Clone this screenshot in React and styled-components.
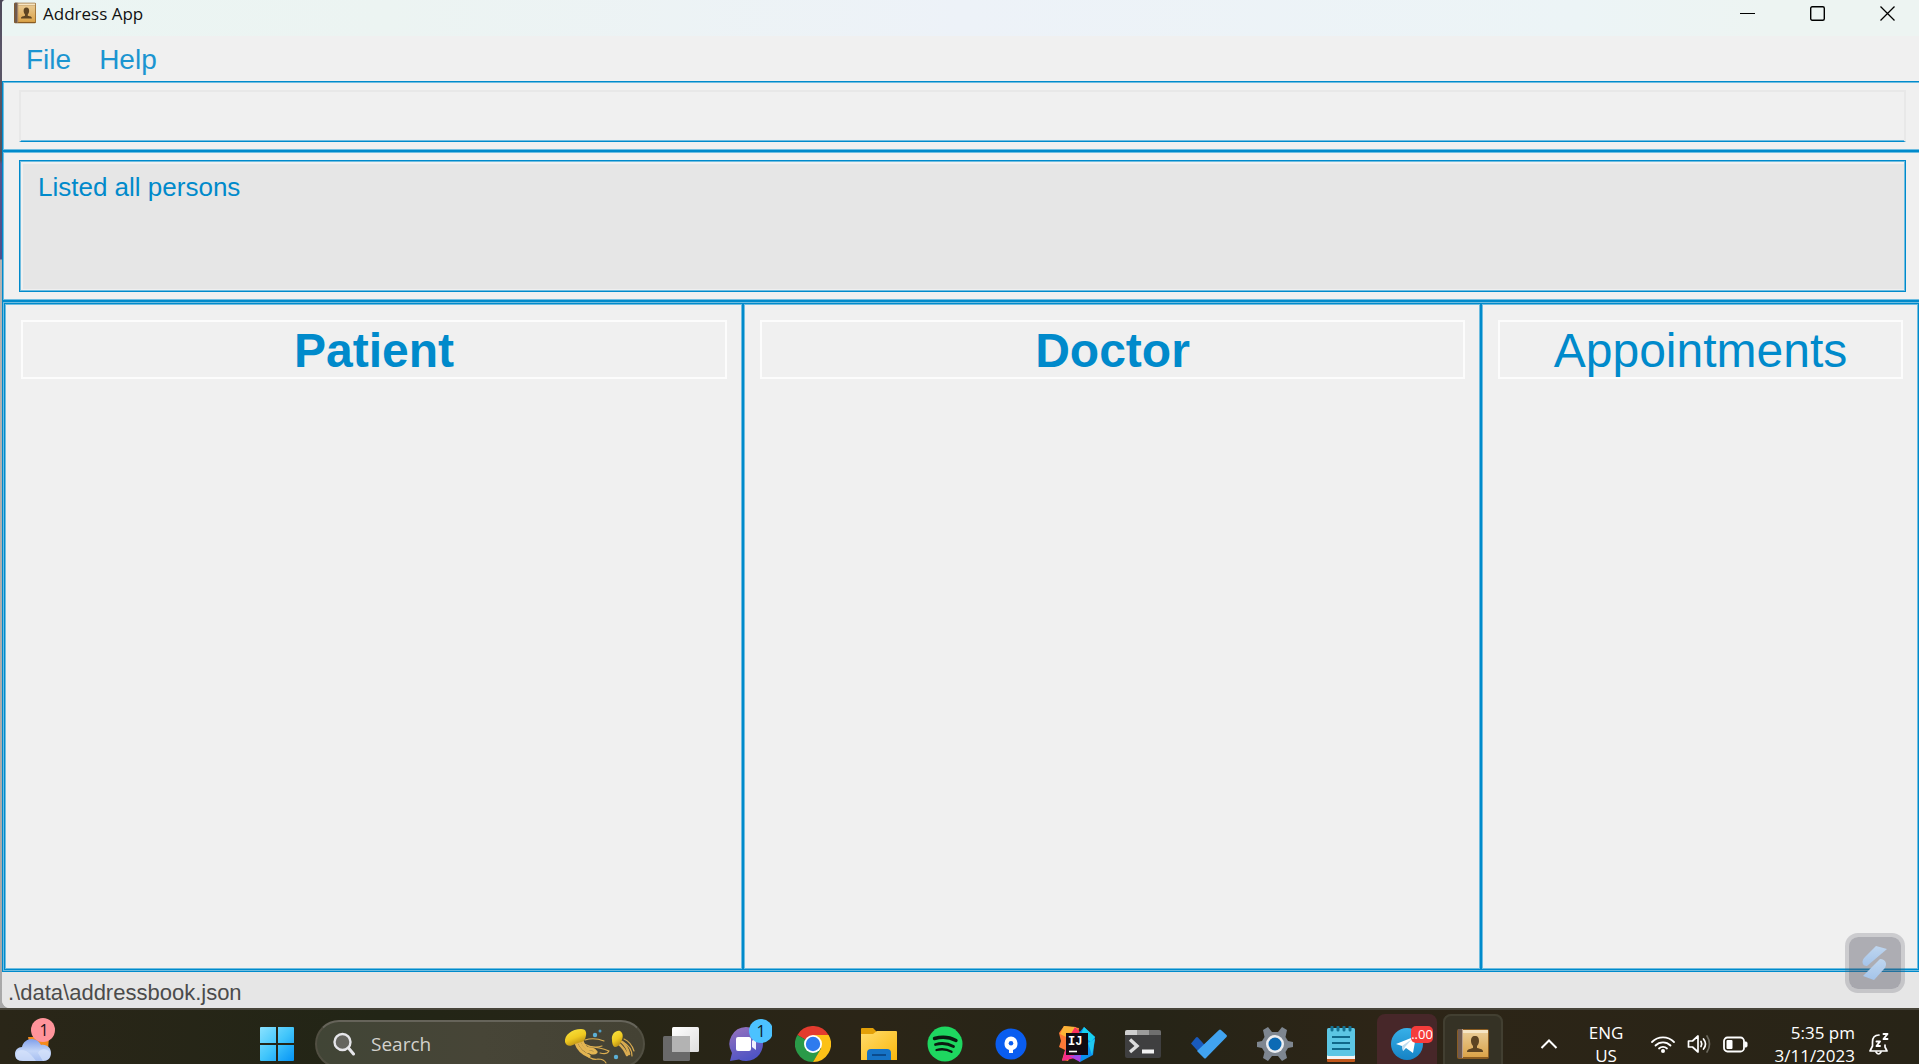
import React from 'react';
import styled, { createGlobalStyle, css } from 'styled-components';

const blue = '#008acb';
const paleBlue = '#6fbde0';
const panel = '#f0f0f0';
const arial = '"Liberation Sans", Arial, sans-serif';
const system = '"Open Sans", "Noto Sans", sans-serif';

const GlobalStyle = createGlobalStyle`
  *, *::before, *::after { box-sizing: border-box; }
  body { margin: 0; font-family: ${arial}; }
  button, input, textarea { font: inherit; color: inherit; border-radius: 0; }
  button { padding: 0; border: 0; background: none; cursor: default; }
  svg { display: block; flex: none; }
`;

const doubleLine = css`
  border: 1px solid ${blue};
  box-shadow: inset 0 0 0 1px ${paleBlue};
`;

const Desktop = styled.div`
  height: 100vh;
  display: flex;
  flex-direction: column;
  overflow: hidden;
  background: #28241a;
`;

const Backdrop = styled.div`
  flex: 1;
  min-height: 0;
  display: flex;
  padding-left: 2px;
  background: linear-gradient(#4c4858 0, #5a5568 50px, #54525c 160px, #55558e 164px, #50508c 259px, #b4b4b4 260px, #a8a8a8 100%);
`;

const Window = styled.div`
  flex: 1;
  min-width: 0;
  margin-right: -2px;
  display: flex;
  flex-direction: column;
  background: ${panel};
  border-radius: 4px 0 0 8px;
  overflow: hidden;
`;

const TitleBar = styled.header`
  height: 36px;
  margin-right: -1px;
  padding: 0 0 11px 12px;
  display: flex;
  align-items: center;
  background: linear-gradient(90deg, #ebf5f3 0, #ecf4f2 20%, #edf2f8 50%, #ecf4f6 82%, #edf4f2 92%);
`;

const WindowTitle = styled.h1`
  flex: 1;
  margin: 0;
  padding: 2px 0 0 7px;
  font: 400 17px/24px ${system};
  color: #111;
`;

const WindowButton = styled.button`
  width: 70px;
  height: 25px;
  padding-top: 2px;
  display: flex;
  align-items: center;
  justify-content: center;
`;

const MenuBar = styled.nav`
  height: 45px;
  padding: 2px 0 0 10px;
  display: flex;
`;

const MenuButton = styled.button`
  padding: 0 14px;
  font-size: 28px;
  color: #1b95d1;
`;

const Strip = styled.section`
  ${doubleLine}
  display: flex;
  padding: 8px 14px 8px 16px;
`;

const CommandInput = styled.input`
  flex: 1;
  min-width: 0;
  height: 52px;
  padding: 0 14px;
  font-size: 26px;
  color: ${blue};
  background: ${panel};
  border: 2px solid #e8e8e8;
  border-bottom: 1px solid ${blue};
  box-shadow: inset 0 -1px ${paleBlue};
  outline: none;
`;

const ResultFrame = styled.div`
  ${doubleLine}
  flex: 1;
  display: flex;
  padding: 3px 1px 2px 3px;
`;

const ResultText = styled.textarea`
  flex: 1;
  height: 125px;
  padding: 8px 15px;
  border: 0;
  outline: none;
  resize: none;
  overflow: hidden;
  font-size: 26px;
  line-height: 30px;
  color: ${blue};
  background: #e6e6e6;
`;

const Columns = styled.main`
  ${doubleLine}
  flex: 1;
  min-height: 0;
  padding: 1px;
  display: grid;
  grid-template-columns: 739fr 738fr 438fr;
`;

const Column = styled.section`
  ${doubleLine}
  padding: 16px 15px 16px 16px;
`;

const ColumnTitle = styled.h2`
  height: 59px;
  margin: 0;
  border: 2px solid #fcfcfc;
  font-size: 48px;
  line-height: 57px;
  font-weight: ${(p) => (p.$strong ? 700 : 400)};
  text-align: center;
  color: ${blue};
`;

const StatusBar = styled.footer`
  height: 36px;
  padding: 5px 6px 0;
  font-size: 22px;
  line-height: 31px;
  color: #4b4b4b;
  background: #e6e6e6;
`;

const FloatingButton = styled.button`
  position: fixed;
  right: 14px;
  bottom: 71px;
  width: 60px;
  height: 60px;
  display: grid;
  place-items: center;
  border: 4px solid rgba(90, 90, 105, 0.24);
  border-radius: 13px;
  background: rgba(80, 80, 95, 0.42) padding-box;
`;

const Taskbar = styled.div`
  height: 56px;
  border-top: 2px solid #48453a;
  display: flex;
  align-items: flex-start;
  background: linear-gradient(90deg, #2a2618, #222516 20%, #2b2517 45%, #262417 60%, #2d2517 72%, #282417);
  color: #fff;
  font-family: ${system};
  overflow: hidden;
`;

const Weather = styled.button`
  width: 247px;
  height: 60px;
  padding: 4px 0 0 14px;
`;

const Apps = styled.div`
  display: flex;
  gap: 6px;
  padding-top: 4px;
`;

const AppButton = styled.button`
  width: 60px;
  height: 60px;
  flex: none;
  display: grid;
  place-items: center;
  border-radius: 8px;
  background: ${(p) => p.$tint || 'none'};
  box-shadow: ${(p) => (p.$active ? 'inset 0 0 0 2px #423f31' : 'none')};
`;

const SearchBox = styled.label`
  width: 330px;
  height: 48px;
  margin: 6px 0 0 2px;
  padding: 0 4px 0 16px;
  display: flex;
  align-items: center;
  gap: 16px;
  border: 2px solid #514f42;
  border-top-color: #66645a;
  border-radius: 24px;
  background: linear-gradient(90deg, #414536, #474537 50%, #444234);
`;

const SearchInput = styled.input`
  flex: 1;
  min-width: 0;
  padding: 0;
  border: 0;
  outline: none;
  background: none;
  font-size: 19px;
  &::placeholder { color: #d3d2cd; opacity: 1; }
`;

const Tray = styled.div`
  margin-left: auto;
  padding: 11px 16px 0 0;
  display: flex;
  font-size: 17px;
  line-height: 23px;
`;

const TrayButton = styled.button`
  width: ${(p) => p.$w}px;
  height: 46px;
  display: flex;
  align-items: center;
  justify-content: center;
`;

const TrayText = styled.button`
  width: ${(p) => p.$w}px;
  height: 46px;
  text-align: ${(p) => p.$align};
`;

const BookIcon = ({ size }) => (
  <svg width={size} height={size} viewBox="0 0 32 32">
    <defs>
      <linearGradient id="cover" x1="0" y1="0" x2="0" y2="1">
        <stop offset="0" stopColor="#e8c991" /><stop offset="1" stopColor="#dba348" />
      </linearGradient>
    </defs>
    <rect x="0" y="1" width="32" height="30" rx="2" fill="#8a5c22" />
    <rect x="6" y="2" width="25" height="3" fill="#f6e5c4" />
    <rect x="6" y="5" width="25" height="24" fill="url(#cover)" />
    <rect x="1" y="1" width="4" height="29" fill="#6e5a50" />
    <rect x="5" y="1" width="1" height="29" fill="#baa18b" />
    <path d="M18 8c3 0 4 2 4 5 0 2-1 4-2 5v2c4 1 6 1 6 4H10c0-3 3-3 6-4v-2c-1-1-2-3-2-5 0-3 1-5 4-5z" fill="#5d4422" />
  </svg>
);

const WeatherIcon = () => (
  <svg width="44" height="50" viewBox="0 0 44 50">
    <defs>
      <linearGradient id="cloud" x1="0" y1="0" x2="0" y2="1">
        <stop offset="0" stopColor="#7f9fea" /><stop offset=".55" stopColor="#c4d6f8" /><stop offset="1" stopColor="#a5bdf0" />
      </linearGradient>
    </defs>
    <path d="M14 20h21l-1 13-8 4-10-8z" fill="#f58a1c" />
    <path d="M9 44C3 44 1 41 1 37s3-7 7-7c1-5 5-8 10-8 4 0 7 2 9 6 6-1 10 3 10 8s-3 8-8 8z" fill="url(#cloud)" />
    <path d="M9 44c-6 0-8-3-7-7 1-4 6-5 10-3 4 2 7 6 10 10zM24 36c2-5 10-5 12 0 1 5-3 8-7 8z" fill="#dbe6fb" opacity=".6" />
    <circle cx="29" cy="13" r="12" fill="#ff949b" />
    <text x="30" y="19" textAnchor="middle" fontFamily={system} fontSize="16" fill="#201014">1</text>
  </svg>
);

const StartIcon = () => (
  <svg width="36" height="36" viewBox="0 0 36 36">
    <defs>
      <linearGradient id="win" x1="0" y1="0" x2="1" y2="1">
        <stop offset="0" stopColor="#8ae2ff" /><stop offset=".5" stopColor="#42c6fb" /><stop offset="1" stopColor="#0594f6" />
      </linearGradient>
    </defs>
    <path d="M1 2q0-1 1-1h15v16H1zM19 1h15q1 0 1 1v15H19zM1 19h16v16H2q-1 0-1-1zM19 19h16v15q0 1-1 1H19z" fill="url(#win)" />
  </svg>
);

const SearchIcon = () => (
  <svg width="22" height="24" viewBox="0 0 22 24" fill="none" stroke="#e6e6ea" strokeWidth="2.4" strokeLinecap="round">
    <circle cx="9.5" cy="10" r="8" fill="#65655f" /><path d="M15.5 16l5 6" strokeWidth="3" />
  </svg>
);

const JellyfishIcon = () => (
  <svg width="75" height="42" viewBox="0 0 75 42" fill="none" strokeLinecap="round">
    <defs>
      <linearGradient id="bell" x1="0" y1="0" x2=".5" y2="1">
        <stop offset="0" stopColor="#f8e544" /><stop offset=".6" stopColor="#efc920" /><stop offset="1" stopColor="#b98e16" />
      </linearGradient>
    </defs>
    <g stroke="#dcae50">
      <path d="M21 17q9-3 19 1M20 21q10 5 18 2M24 24q12 0 21 4-2 4-9 2M20 30q8 8 14 6 6 0 8 4" strokeWidth="1.1" />
    </g>
    <g stroke="#e3b552">
      <path d="M12 20q3 9 13 13" strokeWidth="3.200" /><path d="M15 19q4 9 11 10 4 2 6 0" strokeWidth="3.200" /><path d="M18 18q3 8 8 8 4 0 5 2" strokeWidth="3" />
    </g>
    <path d="M1 19C0 12 8 6 17 6c6 0 6 5 4 10-2 4-6 3-10 5-5 3-9 2-10-2z" fill="url(#bell)" />
    <g stroke="#d9ab50">
      <path d="M55 21q5 4 8 11M58 19q5 4 7 12" strokeWidth="2.600" />
      <path d="M60 16q7 3 10 12M59 19q9 5 9 14" strokeWidth="1.200" />
    </g>
    <path d="M48 17c-1-6 4-10 8-9 4 2 3 8 1 11-1 3-4 5-6 5s-3-4-3-7z" fill="url(#bell)" />
    <circle cx="31" cy="12" r="2.200" fill="#5cb0d6" /><circle cx="36" cy="8" r="1.500" fill="#4e9dc4" /><circle cx="52" cy="34" r="2.200" fill="#5cb0d6" />
  </svg>
);

const TaskViewIcon = () => (
  <svg width="36" height="34" viewBox="0 0 36 34">
    <defs>
      <linearGradient id="tv" x1="0" y1="0" x2="1" y2="1"><stop offset="0" stopColor="#fff" /><stop offset="1" stopColor="#dedede" /></linearGradient>
    </defs>
    <rect x="9" y="0" width="27" height="25" rx="1.5" fill="url(#tv)" />
    <rect x="0" y="9" width="27" height="25" rx="1.5" fill="#696969" />
    <path d="M9 9h18v16H9z" fill="#b3b3b3" />
  </svg>
);

const ChatIcon = () => (
  <svg width="50" height="50" viewBox="0 2 50 50">
    <defs>
      <linearGradient id="chat" x1="0" y1="0" x2=".4" y2="1"><stop offset="0" stopColor="#9873bd" /><stop offset="1" stopColor="#5054c4" /></linearGradient>
    </defs>
    <path d="M24 10a17 17 0 1 1-7 32.500L8 44l2-8A17 17 0 0 1 24 10z" fill="url(#chat)" />
    <rect x="14" y="20" width="15" height="14" rx="2" fill="#fff" /><path d="M30 24l4-4v13l-4-3z" fill="#f1effd" />
    <circle cx="39" cy="14" r="12" fill="#4cc2ff" />
    <text x="39" y="20" textAnchor="middle" fontFamily={system} fontSize="16" fill="#0b1c26">1</text>
  </svg>
);

const ChromeIcon = () => (
  <svg width="36" height="36" viewBox="0 0 36 36">
    <path d="M18 18L2.400 9A18 18 0 0 1 33.600 9z" fill="#e33b2e" />
    <path d="M18 18L2.400 9A18 18 0 0 0 18 36l8-13z" fill="#2a9a48" />
    <path d="M18 9h15.600A18 18 0 0 1 18 36l8-13.500z" fill="#fcc117" />
    <circle cx="18" cy="18" r="9" fill="#fff" /><circle cx="18" cy="18" r="7.200" fill="#2e7bee" />
  </svg>
);

const FolderIcon = () => (
  <svg width="36" height="34" viewBox="0 0 36 34">
    <defs>
      <linearGradient id="fold" x1="0" y1="0" x2="1" y2="1"><stop offset="0" stopColor="#ffdc6c" /><stop offset="1" stopColor="#fab70c" /></linearGradient>
    </defs>
    <path d="M0 2q0-1 1-1h11l4 4v6H0z" fill="#e3a008" />
    <path d="M0 7h12l4-3h19q1 0 1 1v28H0z" fill="url(#fold)" />
    <path d="M6 33v-7q0-4 4-4h16q4 0 4 4v7z" fill="#1673c6" /><path d="M11 28h14" stroke="#0b4b8d" strokeWidth="2" />
  </svg>
);

const SpotifyIcon = () => (
  <svg width="36" height="36" viewBox="0 0 36 36" fill="none" stroke="#0b1a10" strokeLinecap="round">
    <circle cx="18" cy="18" r="17.500" fill="#1ed760" stroke="none" />
    <path d="M7.500 12.500c7-2 15-1.500 21.500 2" strokeWidth="3.400" /><path d="M8.500 18.500c6-1.700 12.500-1 18 2" strokeWidth="2.800" /><path d="M9.500 24c5-1.300 10.500-.8 15 1.800" strokeWidth="2.300" />
  </svg>
);

const SourcetreeIcon = () => (
  <svg width="32" height="32" viewBox="0 0 32 32">
    <circle cx="16" cy="16" r="15.500" fill="#0a5df0" />
    <path d="M16 8.500a7 7 0 0 1 2 13.500v3h-4v-3a7 7 0 0 1 2-13.500z" fill="#fff" /><circle cx="16" cy="15.300" r="2.300" fill="#0a5df0" />
  </svg>
);

const IdeaIcon = () => (
  <svg width="36" height="36" viewBox="0 0 36 36">
    <path d="M5 0l15 2-2 16-9 17-6-1 3-10-6-3 2-6-2-8z" fill="#fd7836" />
    <path d="M5 0l12 1 4 8-8 5-12-6z" fill="#fbb437" /><path d="M16 1l5 5-2 8-9-3z" fill="#fe315d" />
    <path d="M7 22l11 6-2 4-13 3z" fill="#f42c8b" /><path d="M25 1l11 10-2 18-13 7-7-8 5-20z" fill="#0b91f1" />
    <path d="M25 1l11 10-4 5-10-8z" fill="#18d1ef" /><path d="M10 30l12-1-1 7z" fill="#a946e8" /><path d="M29 17l7-4-3 16z" fill="#20c9ef" />
    <rect x="7" y="7" width="22" height="22" fill="#110a12" />
    <text x="9" y="19" fontFamily='"Liberation Mono", monospace' fontWeight="700" fontSize="12" fill="#fff">IJ</text>
    <path d="M10 25.500h8" stroke="#fff" strokeWidth="1.600" />
  </svg>
);

const TerminalIcon = () => (
  <svg width="36" height="28" viewBox="0 0 36 28">
    <rect width="36" height="28" rx="2" fill="#3f3f40" /><path d="M2 0h10v5H0V2q0-2 2-2z" fill="#cfcfcf" /><path d="M12 0h12v5H12z" fill="#9c9c9c" /><path d="M24 0h10q2 0 2 2v3H24z" fill="#6f6f6f" />
    <path d="M5 9.500l7 6.500-7 6" fill="none" stroke="#dcdcdc" strokeWidth="3.400" /><path d="M17 21.500h12" stroke="#f2f2f2" strokeWidth="4" />
  </svg>
);

const TodoIcon = () => (
  <svg width="36" height="30" viewBox="0 0 36 30">
    <path d="M0 14.500l5-6q1-1 2 0l8 9-5 8z" fill="#195abd" /><path d="M6 22L28 1q1-1 2 0l5.500 5q.8 1 0 2L15 29q-1 1-2 0z" fill="#41a3f0" />
  </svg>
);

const SettingsIcon = () => (
  <svg width="36" height="36" viewBox="0 0 36 36">
    <path d="M15 6l-4-5-5 3 1.500 7L5 15l-5 1v5l5 1 2.500 4L6 32l5 3 4-5h6l4 5 5-3-1.500-6L31 22l5-1v-5l-5-1-2.500-4L30 4l-5-3-4 5z" fill="#7e8690" />
    <circle cx="18" cy="18" r="9" fill="#eceef1" /><circle cx="18" cy="18" r="6.500" fill="#0c6ab4" />
  </svg>
);

const NotepadIcon = () => (
  <svg width="28" height="36" viewBox="0 0 28 36">
    <rect y="30" width="28" height="6" rx="1" fill="#c2571b" /><rect y="28" width="28" height="5" fill="#f4f4f4" />
    <rect y="2" width="28" height="28" rx="1.500" fill="#5cc6e4" />
    <path d="M5 11h18M5 17h18M5 23h18" stroke="#10688a" strokeWidth="2" />
    <path d="M5 1v3M11 1v3M17 1v3M23 1v3" stroke="#147293" strokeWidth="3" strokeLinecap="round" />
  </svg>
);

const TelegramIcon = () => (
  <svg width="60" height="60" viewBox="0 0 60 60">
    <defs><linearGradient id="tg" x1="0" y1="0" x2="0" y2="1"><stop offset="0" stopColor="#37b0e8" /><stop offset="1" stopColor="#1683c5" /></linearGradient></defs>
    <circle cx="30" cy="30" r="16" fill="url(#tg)" /><path d="M19 30l20-8-3 17-7-5-3 3-1-5z" fill="#fff" /><path d="M25 32l10-7-7 8-2 4z" fill="#bfdcf0" />
    <rect x="34" y="12" width="22" height="17" rx="5" fill="#f53c3b" />
    <text x="45" y="25" textAnchor="middle" fontFamily={system} fontSize="13" fill="#fff">..00</text>
  </svg>
);

const ChevronIcon = () => (
  <svg width="18" height="10" viewBox="0 0 18 10" fill="none" stroke="#fff" strokeWidth="2"><path d="M1.500 9L9 1.500 16.500 9" /></svg>
);

const WifiIcon = () => (
  <svg width="26" height="20" viewBox="0 0 26 20" fill="none" stroke="#fff" strokeWidth="1.800" strokeLinecap="round">
    <path d="M2 8a15.500 15.500 0 0 1 22 0M5.500 11.500a10.500 10.500 0 0 1 15 0M9 14.500a5.800 5.800 0 0 1 8 0" />
    <circle cx="13" cy="17" r="2" fill="#fff" stroke="none" />
  </svg>
);

const VolumeIcon = () => (
  <svg width="25" height="20" viewBox="0 0 25 20" fill="none" stroke="#fff" strokeWidth="1.700" strokeLinecap="round" strokeLinejoin="round">
    <path d="M1.500 7h4L11 2v16l-5.500-5h-4z" /><path d="M14 7.500q1.500 2.500 0 5M16.500 5q4 5 0 10" /><path d="M20 2q5 8 0 16" stroke="#6b685d" />
  </svg>
);

const BatteryIcon = () => (
  <svg width="25" height="17" viewBox="0 0 25 17"><rect x="1" y="1.500" width="20" height="14" rx="3.500" fill="none" stroke="#fff" strokeWidth="1.800" /><rect x="3.500" y="4" width="6" height="9" rx="1" fill="#fff" /><path d="M22 6h1q1 0 1 1v3q0 1-1 1h-1z" fill="#fff" stroke="#fff" /></svg>
);

const BellIcon = () => (
  <svg width="22" height="24" viewBox="0 0 22 24" fill="none" stroke="#fff" strokeWidth="1.700" strokeLinejoin="round" strokeLinecap="round">
    <path d="M11 3C6.500 3 4.500 6 4.500 10v4L2 19h17l-2-4v-2" /><path d="M8 20q2.500 4 5 0" />
    <path d="M8.500 9.500H12L8.500 14H12M15.500 2h4l-4 5h4" strokeWidth="1.900" />
  </svg>
);

const SwiftIcon = () => (
  <svg width="28" height="36" viewBox="0 0 28 36">
    <defs><linearGradient id="sw" x1="0" y1="0" x2="0" y2="1"><stop offset="0" stopColor="#bfd6ef" /><stop offset="1" stopColor="#a4c4ea" /></linearGradient></defs>
    <path d="M15 1l11 3L6 21C1 21 0 16 4 12z" fill="url(#sw)" /><path d="M19 14c6 0 8 6 4 10L13 35 2 31z" fill="url(#sw)" />
  </svg>
);

const apps = [
  { name: 'Task view', Icon: TaskViewIcon },
  { name: 'Chat', Icon: ChatIcon },
  { name: 'Chrome', Icon: ChromeIcon },
  { name: 'File Explorer', Icon: FolderIcon },
  { name: 'Spotify', Icon: SpotifyIcon },
  { name: 'Sourcetree', Icon: SourcetreeIcon },
  { name: 'IntelliJ IDEA', Icon: IdeaIcon },
  { name: 'Terminal', Icon: TerminalIcon },
  { name: 'To Do', Icon: TodoIcon },
  { name: 'Settings', Icon: SettingsIcon },
  { name: 'Notepad', Icon: NotepadIcon },
  { name: 'Telegram', Icon: TelegramIcon, tint: '#472729' },
  { name: 'Address App', Icon: () => <BookIcon size={32} />, tint: '#353225', active: true },
];

export default function App() {
  return (
    <Desktop>
      <GlobalStyle />
      <Backdrop>
        <Window>
          <TitleBar>
            <BookIcon size={22} />
            <WindowTitle>Address App</WindowTitle>
            <WindowButton aria-label="Minimize">
              <svg width="15" height="15" viewBox="0 0 15 15"><path d="M0 7.500h15" stroke="#000" /></svg>
            </WindowButton>
            <WindowButton aria-label="Maximize">
              <svg width="15" height="15" viewBox="0 0 15 15"><rect x=".7" y=".7" width="13.600" height="13.600" rx="1.500" fill="none" stroke="#000" strokeWidth="1.400" /></svg>
            </WindowButton>
            <WindowButton aria-label="Close">
              <svg width="15" height="15" viewBox="0 0 15 15"><path d="M.5.5l14 14M14.500.5l-14 14" stroke="#000" strokeWidth="1.300" /></svg>
            </WindowButton>
          </TitleBar>
          <MenuBar>
            <MenuButton>File</MenuButton>
            <MenuButton>Help</MenuButton>
          </MenuBar>
          <Strip>
            <CommandInput aria-label="Command" />
          </Strip>
          <Strip>
            <ResultFrame>
              <ResultText readOnly aria-label="Result" value="Listed all persons" />
            </ResultFrame>
          </Strip>
          <Columns>
            <Column><ColumnTitle $strong>Patient</ColumnTitle></Column>
            <Column><ColumnTitle $strong>Doctor</ColumnTitle></Column>
            <Column><ColumnTitle>Appointments</ColumnTitle></Column>
          </Columns>
          <StatusBar>.\data\addressbook.json</StatusBar>
        </Window>
      </Backdrop>
      <Taskbar>
        <Weather aria-label="Weather"><WeatherIcon /></Weather>
        <Apps>
          <AppButton aria-label="Start"><StartIcon /></AppButton>
          <SearchBox>
            <SearchIcon />
            <SearchInput placeholder="Search" aria-label="Search" />
            <JellyfishIcon />
          </SearchBox>
          {apps.map(({ name, Icon, tint, active }) => (
            <AppButton key={name} aria-label={name} $tint={tint} $active={active}><Icon /></AppButton>
          ))}
        </Apps>
        <Tray>
          <TrayButton $w={48} aria-label="Hidden icons"><ChevronIcon /></TrayButton>
          <TrayText $w={66} $align="center">ENG<br />US</TrayText>
          <TrayButton $w={48} aria-label="Network"><WifiIcon /></TrayButton>
          <TrayButton $w={24} aria-label="Volume"><VolumeIcon /></TrayButton>
          <TrayButton $w={48} aria-label="Battery"><BatteryIcon /></TrayButton>
          <TrayText $w={96} $align="right">5:35 pm<br />3/11/2023</TrayText>
          <TrayButton $w={48} aria-label="Notifications"><BellIcon /></TrayButton>
        </Tray>
      </Taskbar>
      <FloatingButton aria-label="Quick panel"><SwiftIcon /></FloatingButton>
    </Desktop>
  );
}
